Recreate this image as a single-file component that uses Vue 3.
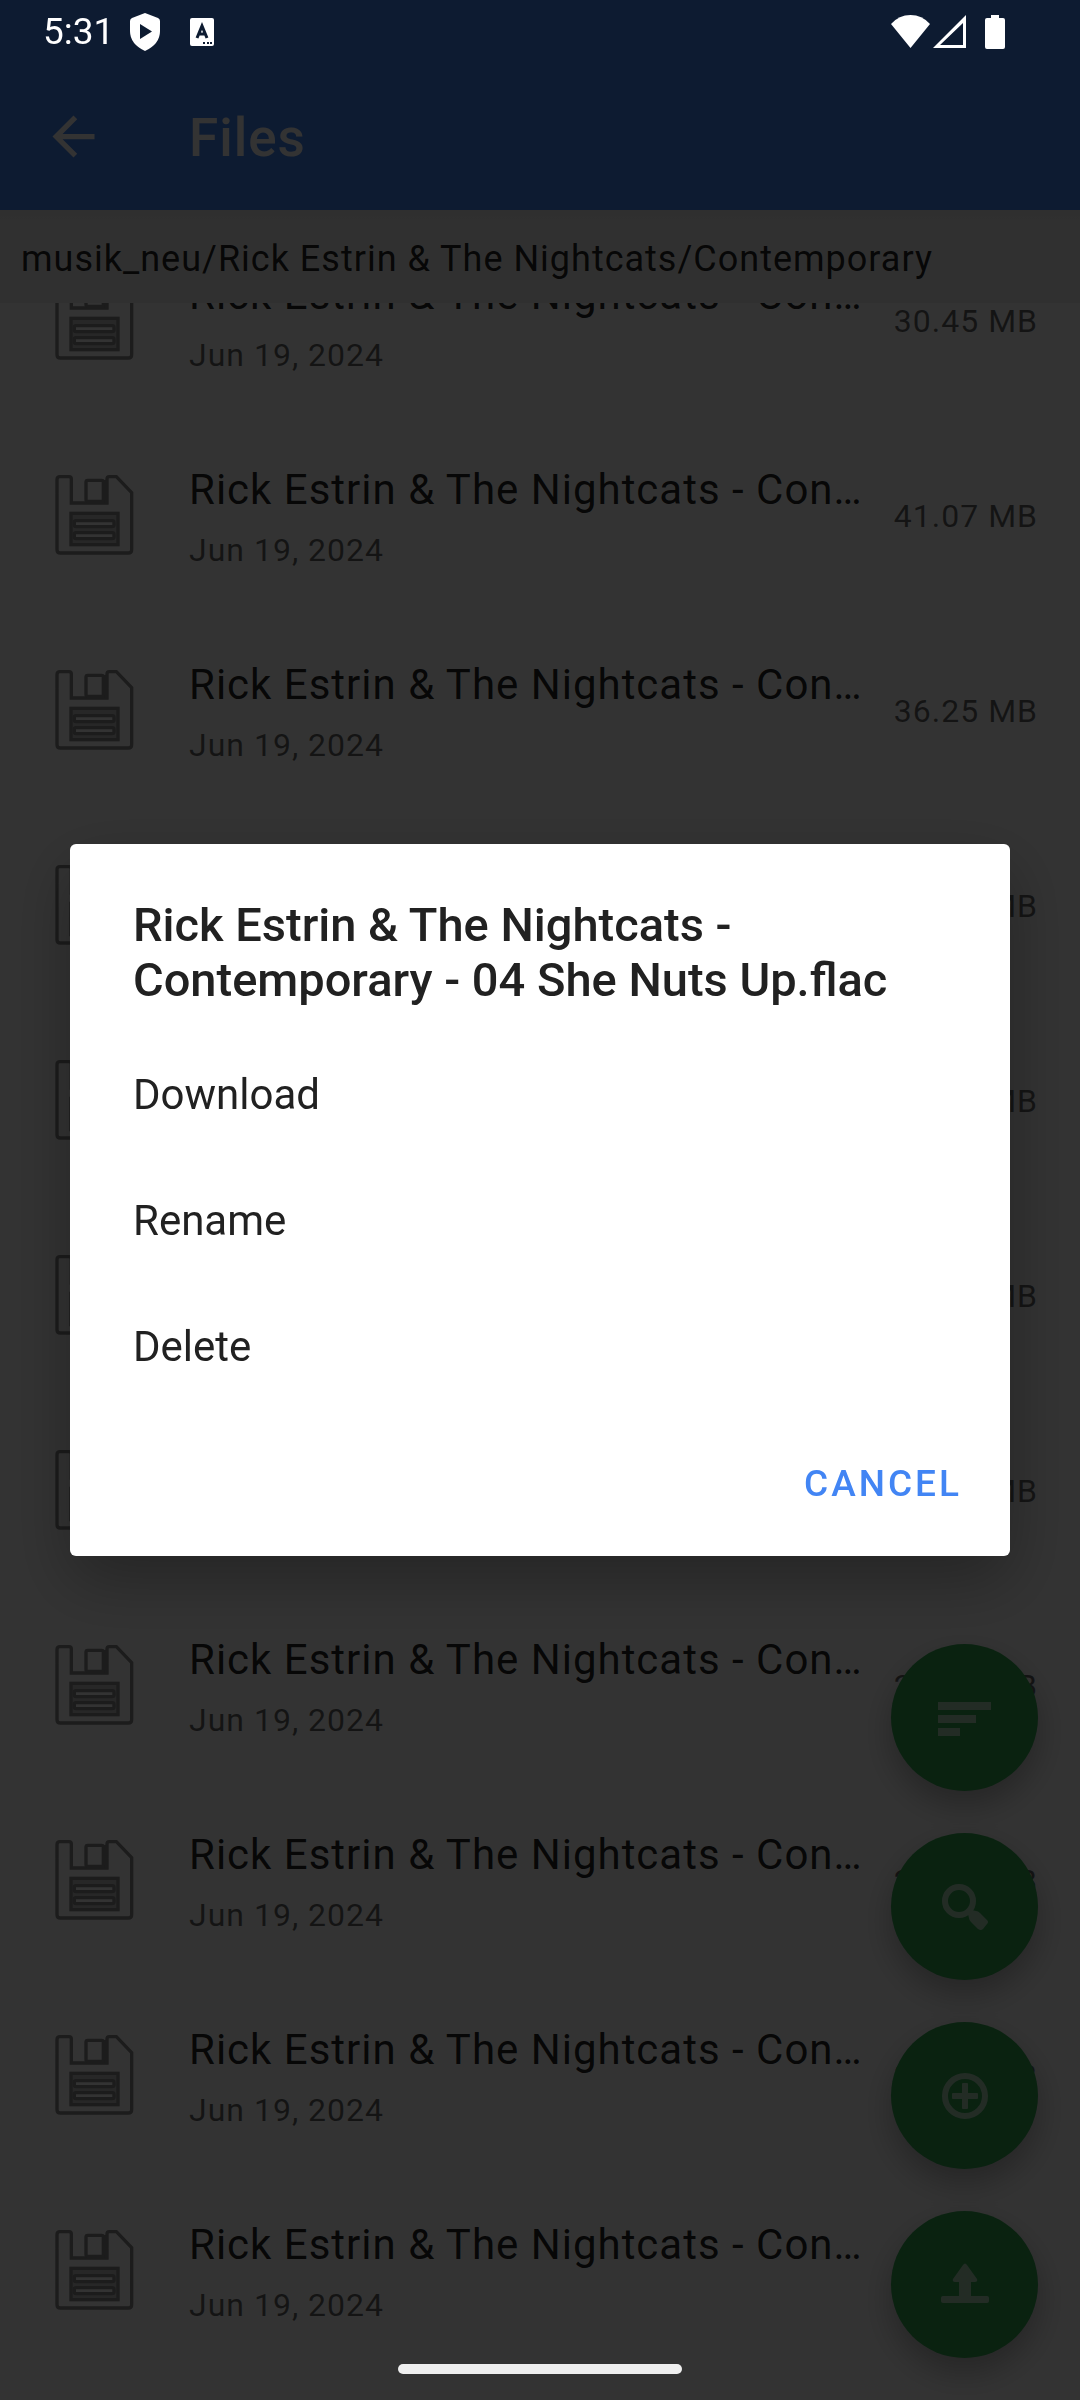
<script setup>
import { ref } from 'vue'

const path = 'musik_neu/Rick Estrin & The Nightcats/Contemporary'
const name = 'Rick Estrin & The Nightcats - Contemporary'
const date = 'Jun 19, 2024'
const sizes = [
  '30.45 MB', '41.07 MB', '36.25 MB', '30.62 MB', '33.80 MB', '28.94 MB',
  '35.06 MB', '28.63 MB', '26.60 MB', '30.86 MB', '30.80 MB',
]
const files = ref(sizes.map((size, id) => ({ id, name, date, size })))
const actions = ['Download', 'Rename', 'Delete']
</script>

<template>
  <div class="screen">
    <header class="appbar">
      <button class="back" aria-label="Back">
        <svg viewBox="0 0 24 24" width="63" height="63" fill="#fff">
          <path d="M20 11H7.83l5.59-5.59L12 4l-8 8 8 8 1.41-1.41L7.83 13H20z" />
        </svg>
      </button>
      <h1>Files</h1>
    </header>
    <nav class="path">{{ path }}</nav>

    <main class="viewport">
      <ul class="list">
        <li v-for="f in files" :key="f.id" class="row">
          <svg class="disk" viewBox="0 0 270 300" width="90" height="100" fill="none" stroke="#8a8a8a" stroke-width="10">
            <path d="M30 50H57Q64 50 64 57V129H171V57Q171 50 178 50H199L245 98V269Q245 279 235 279H31Q21 279 21 269V59Q21 50 30 50Z" />
            <path d="M160 60H171V129H160Z" fill="#8a8a8a" stroke="none" />
            <rect x="108" y="61" width="52" height="63" rx="5" />
            <rect x="63" y="160" width="141" height="94" fill="#c4c4c4" />
            <rect x="73" y="182" width="119" height="18" rx="5" fill="#fff" />
            <rect x="73" y="218" width="119" height="18" rx="5" fill="#fff" />
          </svg>
          <div class="info">
            <div class="name">{{ f.name }}</div>
            <div class="date">{{ f.date }}</div>
          </div>
          <div class="size">{{ f.size }}</div>
        </li>
      </ul>
    </main>

    <div class="fabs">
      <button class="fab" aria-label="Sort">
        <svg viewBox="0 0 66 66" width="66" height="66">
          <path d="M6 17H59V25H6ZM6 30H44V38H6ZM6 43H28V51H6Z" />
        </svg>
      </button>
      <button class="fab" aria-label="Search">
        <svg viewBox="0 0 66 66" width="66" height="66">
          <circle class="line" cx="27" cy="27" r="14" />
          <path d="M36 40L40 36L44 37Q46 37 48 39L55 46Q57 48 55 50L51 55Q49 57 46 55L39 48Q37 46 37 44Z" />
        </svg>
      </button>
      <button class="fab" aria-label="Add">
        <svg viewBox="0 0 66 66" width="66" height="66">
          <circle class="line" cx="33" cy="33" r="20" />
          <path d="M31 20H35Q36 20 36 21V30H45Q46 30 46 31V35Q46 36 45 36H36V45Q36 46 35 46H31Q30 46 30 45V36H21Q20 36 20 35V31Q20 30 21 30H30V21Q30 20 31 20Z" />
        </svg>
      </button>
      <button class="fab" aria-label="Upload">
        <svg viewBox="0 0 66 66" width="66" height="66">
          <path d="M31 13Q33 10 35 13L45 27Q46 30 43 30H39V44H55Q57 44 57 46V49Q57 51 55 51H11Q9 51 9 49V46Q9 44 11 44H27V30H23Q20 30 21 27Z" />
        </svg>
      </button>
    </div>

    <div class="scrim">
      <section class="dialog" role="dialog" aria-modal="true" aria-labelledby="dialog-title">
        <h2 id="dialog-title">Rick Estrin &amp; The Nightcats - Contemporary - 04 She Nuts Up.flac</h2>
        <button v-for="a in actions" :key="a" class="action">{{ a }}</button>
        <div class="footer">
          <button class="cancel">CANCEL</button>
        </div>
      </section>
    </div>

    <div class="statusbar">
      <span class="clock">5:31</span>
      <svg class="shield" viewBox="0 0 30 38" width="30" height="38">
        <path fill="#fff" d="M15 0L28 5Q30 6 30 8V18Q30 31 15 38Q0 31 0 18V8Q0 6 2 5Z" />
        <path fill="#0d1b31" d="M10 11L22 18.500L10 26Z" />
      </svg>
      <svg class="badge" viewBox="0 0 24 28" width="24" height="28">
        <rect width="24" height="28" rx="2" fill="#fff" />
        <path d="M7 20L12 8L17 20M9 16H15" fill="none" stroke="#0d1b31" stroke-width="3" />
        <path d="M13 24H15V26H13ZM17 24H19V26H17ZM20 24H22V26H20Z" fill="#0d1b31" />
      </svg>
      <svg class="system" viewBox="0 0 116 36" width="116" height="36" fill="#fff">
        <path d="M0 10Q8 1 19.500 1Q31 1 39 10L19.500 34Z" />
        <path fill-rule="evenodd" d="M75 1V34H42ZM72 9L49 31H72Z" />
        <path d="M100 1H108V4H112Q114 4 114 6V33Q114 35 112 35H96Q94 35 94 33V6Q94 4 96 4H100Z" />
      </svg>
    </div>
    <div class="homebar"></div>
  </div>
</template>

<style>
body {
  margin: 0;
  background: #fff;
}
</style>

<style scoped>
.screen {
  display: flex;
  flex-direction: column;
  height: 100vh;
  overflow: hidden;
  background: #fff;
  font-family: Roboto, "Liberation Sans", sans-serif;
}
button {
  border: 0;
  padding: 0;
  background: none;
  font-family: inherit;
}
svg {
  display: block;
  flex: none;
}
h1,
h2,
ul {
  margin: 0;
  padding: 0;
}
.appbar {
  display: flex;
  align-items: center;
  gap: 84px;
  flex: none;
  height: 147px;
  padding: 63px 42px 0;
  background: #4285f4;
}
h1 {
  padding-top: 3px;
  color: #fff;
  font-size: 53px;
  font-weight: 500;
  line-height: 66px;
  letter-spacing: 1px;
}
.path {
  flex: none;
  padding: 25px 21px 20px;
  background: linear-gradient(#ebebeb, #f0f0f0 24px);
  color: rgba(0, 0, 0, 0.87);
  font-size: 36px;
  line-height: 48px;
  letter-spacing: 1px;
  white-space: nowrap;
}
.viewport {
  flex: 1;
  min-height: 0;
  overflow: hidden;
}
.list {
  margin-top: -47px;
  list-style: none;
}
.row {
  display: flex;
  align-items: flex-start;
  box-sizing: border-box;
  height: 195px;
  padding: 9px 42px 0 50px;
}
.info {
  flex: 1;
  min-width: 0;
  margin: 0 22px 0 49px;
}
.name {
  overflow: hidden;
  color: rgba(0, 0, 0, 0.87);
  font-size: 42px;
  line-height: 60px;
  letter-spacing: 1px;
  text-overflow: ellipsis;
  white-space: nowrap;
}
.date,
.size {
  color: rgba(0, 0, 0, 0.6);
  font-size: 32px;
  line-height: 45px;
  letter-spacing: 1px;
  white-space: nowrap;
}
.date {
  margin-top: 8px;
}
.size {
  margin-top: 34px;
}
.fabs {
  position: fixed;
  right: 42px;
  bottom: 42px;
  display: flex;
  flex-direction: column;
  gap: 42px;
}
.fab {
  display: flex;
  align-items: center;
  justify-content: center;
  width: 147px;
  height: 147px;
  border-radius: 50%;
  background: #34a853;
  box-shadow: 0 14px 32px rgba(0, 0, 0, 0.28);
}
.fab svg {
  fill: #fff;
  opacity: 0.6;
}
.fab .line {
  fill: none;
  stroke: #fff;
  stroke-width: 6px;
}
.scrim {
  position: fixed;
  inset: 0;
  display: flex;
  align-items: center;
  padding: 0 70px;
  background: rgba(0, 0, 0, 0.8);
}
.dialog {
  flex: 1;
  padding-top: 53px;
  border-radius: 6px;
  background: #fff;
  color: #212121;
  box-shadow: 0 24px 66px rgba(0, 0, 0, 0.3);
}
h2 {
  padding: 0 63px;
  margin-bottom: 24px;
  font-size: 47px;
  font-weight: 500;
  line-height: 55px;
}
.action {
  display: block;
  width: 100%;
  height: 126px;
  padding: 0 63px;
  color: inherit;
  font-size: 42px;
  text-align: left;
}
.footer {
  display: flex;
  justify-content: flex-end;
  padding: 14px 48px 13px;
}
.cancel {
  height: 120px;
  color: #4285f4;
  font-size: 37px;
  font-weight: 500;
  letter-spacing: 3px;
}
.statusbar {
  position: fixed;
  top: 0;
  left: 0;
  right: 0;
  display: flex;
  align-items: center;
  height: 63px;
  padding: 0 73px 0 43px;
}
.clock {
  color: #fff;
  font-size: 37px;
  line-height: 63px;
}
.shield {
  margin-left: 16px;
}
.badge {
  margin-left: 30px;
}
.system {
  margin-left: auto;
}
.homebar {
  position: fixed;
  bottom: 26px;
  left: 50%;
  width: 284px;
  height: 10px;
  margin-left: -142px;
  border-radius: 5px;
  background: #efefef;
}
</style>
